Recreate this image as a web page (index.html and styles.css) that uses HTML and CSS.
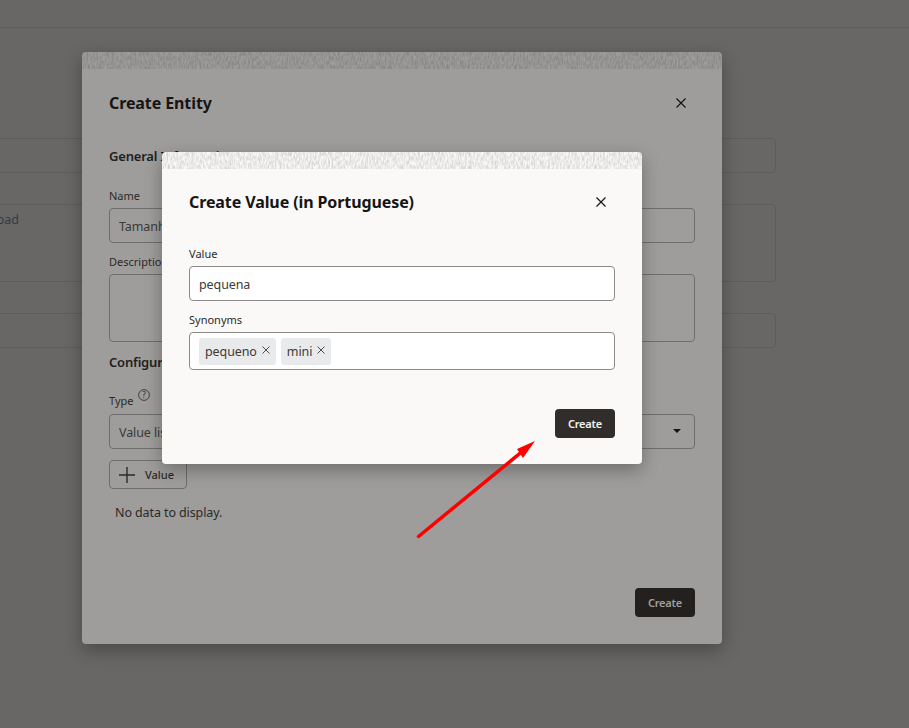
FILE: index.html
```html
<!DOCTYPE html>
<html lang="en">
<head>
    <meta charset="UTF-8">
    <meta name="viewport" content="width=device-width, initial-scale=1.0">
    <title>Create Value</title>
    <link rel="stylesheet" href="styles.css">
</head>
<body>
    <svg class="defs" width="0" height="0">
        <filter id="grain" x="0" y="0" width="100%" height="100%">
            <feTurbulence type="fractalNoise" baseFrequency="0.6 0.22" numOctaves="2" seed="4"/>
            <feColorMatrix values="0 0 0 0 0  0 0 0 0 0  0 0 0 0 0  0.3 0 0 0 -0.09"/>
        </filter>
    </svg>

    <div class="topbar"></div>
    <div class="page-form">
        <div class="page-field"></div>
        <div class="page-field page-area"><span class="page-link">Upload</span></div>
        <div class="page-field"></div>
    </div>

    <div class="dialog dialog-entity">
        <svg class="strip"><rect width="100%" height="100%" filter="url(#grain)"/></svg>
        <div class="dialog-body">
            <div class="dialog-head">
                <h2>Create Entity</h2>
                <svg class="close" viewBox="0 0 10 10"><path d="M.5.5l9 9M9.5.5l-9 9"/></svg>
            </div>
            <h3 class="section">General Information</h3>
            <label class="name-label">Name</label>
            <div class="field">Tamanho</div>
            <label>Description</label>
            <div class="field area"></div>
            <h3 class="section config">Configuration</h3>
            <label class="type-label">Type
                <svg class="help" viewBox="0 0 12 12"><circle cx="6" cy="6" r="5.4"/><text x="6" y="8.7" text-anchor="middle">?</text></svg>
            </label>
            <div class="field select">Value list
                <svg class="caret" viewBox="0 0 8 4"><path d="M0 0h8L4 4z"/></svg>
            </div>
            <button class="add">
                <svg class="plus" viewBox="0 0 16 16"><path d="M8 0v16M0 8h16"/></svg>
                Value
            </button>
            <p class="empty">No data to display.</p>
            <div class="dialog-foot"><button class="primary">Create</button></div>
        </div>
    </div>

    <div class="dialog dialog-value">
        <svg class="strip"><rect width="100%" height="100%" filter="url(#grain)"/></svg>
        <div class="dialog-body">
            <div class="dialog-head">
                <h2>Create Value (in Portuguese)</h2>
                <svg class="close" viewBox="0 0 10 10"><path d="M.5.5l9 9M9.5.5l-9 9"/></svg>
            </div>
            <label class="value-label">Value</label>
            <div class="field">pequena</div>
            <label>Synonyms</label>
            <div class="field chips">
                <span class="chip">pequeno <svg viewBox="0 0 8 8"><path d="M.5.5l7 7M7.5.5l-7 7"/></svg></span>
                <span class="chip">mini <svg viewBox="0 0 8 8"><path d="M.5.5l7 7M7.5.5l-7 7"/></svg></span>
            </div>
            <div class="dialog-foot"><button class="primary">Create</button></div>
        </div>
    </div>

    <svg class="arrow" viewBox="0 0 909 728">
        <path class="arrow-line" d="M418.500 536.500L524 450"/>
        <path class="arrow-head" d="M535 441L517 449L523 458z"/>
    </svg>
</body>
</html>
```

FILE: styles.css
```css
* {
    box-sizing: border-box;
}

body {
    margin: 0;
    height: 728px;
    overflow: hidden;
    position: relative;
    background-color: #686765;
    font-family: "Noto Sans", Arial, sans-serif;
    color: #161513;
}

.defs {
    position: absolute;
}

/* page behind the dialogs */
.topbar {
    height: 28px;
    border-bottom: 1px solid #5e5d5b;
}

.page-form {
    margin: 110px 133px 0 -100px;
}

.page-field {
    height: 35px;
    margin-bottom: 31px;
    border: 1px solid #5e5d5b;
    border-radius: 4px;
}

.page-area {
    height: 78px;
    padding: 6px 0 0 76px;
    font-size: 12.500px;
    letter-spacing: -0.1px;
    color: #2f3d4a;
}

/* dialogs */
.dialog {
    position: absolute;
    display: flex;
    flex-direction: column;
    border-radius: 4px;
    overflow: hidden;
    box-shadow: 0 6px 18px rgba(0, 0, 0, 0.3);
}

.dialog-entity {
    left: 82px;
    top: 52px;
    width: 640px;
    height: 592px;
    background-color: #9e9d9b;
}

.dialog-value {
    left: 162px;
    top: 152px;
    width: 480px;
    height: 312px;
    background-color: #faf9f7;
}

.strip {
    display: block;
    width: 100%;
    height: 17px;
    flex: none;
}

.dialog-body {
    flex: 1;
    display: flex;
    flex-direction: column;
    padding: 16px 27px 27px;
}

.dialog-entity .dialog-body {
    padding-top: 17px;
}

.dialog-value .dialog-body {
    padding-bottom: 26px;
}

.dialog-head {
    height: 34px;
    display: flex;
    align-items: center;
    justify-content: space-between;
}

h2 {
    margin: 0;
    font-size: 16px;
    font-weight: 700;
    line-height: 20px;
    letter-spacing: -0.1px;
}

.close {
    width: 10px;
    height: 10px;
    margin-right: 9px;
    fill: none;
    stroke: #161513;
    stroke-width: 1.2;
}

.section {
    margin: 26px 0 0;
    height: 20px;
    font-size: 13px;
    font-weight: 600;
    line-height: 20px;
    letter-spacing: -0.2px;
    color: #22201e;
}

.section.config {
    margin-top: 10px;
}

label {
    display: block;
    height: 16px;
    margin-top: 11px;
    margin-bottom: 4px;
    font-size: 11px;
    line-height: 16px;
    color: #2c2a28;
}

.name-label {
    margin-top: 22px;
}

.value-label {
    margin-top: 27px;
}

.type-label {
    margin-top: 20px;
    margin-bottom: 6px;
    position: relative;
    line-height: 18px;
}

.help {
    position: absolute;
    left: 29px;
    top: -3px;
    width: 12px;
    height: 12px;
    fill: none;
    stroke: #2c2a28;
    stroke-width: 0.8;
}

.help text {
    font-size: 8px;
    fill: #2c2a28;
    stroke: none;
}

.field {
    height: 35px;
    padding: 1px 9px 0;
    display: flex;
    align-items: center;
    justify-content: space-between;
    border: 1px solid #6f6e6c;
    border-radius: 4px;
    font-size: 12.500px;
    letter-spacing: -0.1px;
    color: #3c3a38;
}

.dialog-value .field {
    background-color: #fff;
    border-color: #8b8a88;
}

.area {
    height: 68px;
}

.caret {
    width: 8px;
    height: 4px;
    margin: -2px 4px 0 0;
    fill: #161513;
}

.add {
    width: 78px;
    height: 29px;
    margin-top: 11px;
    padding: 0 0 0 9px;
    display: flex;
    align-items: center;
    gap: 10px;
    background: none;
    border: 1px solid #6f6e6c;
    border-radius: 4px;
    font-family: inherit;
    font-size: 11px;
    font-weight: 500;
    color: #2c2a28;
}

.plus {
    width: 16px;
    height: 16px;
    fill: none;
    stroke: #2c2a28;
    stroke-width: 1.4;
}

.empty {
    margin: 15px 0 0 6px;
    font-size: 12.500px;
    letter-spacing: -0.1px;
    line-height: 18px;
    color: #2c2a28;
}

.field.chips {
    height: 38px;
    padding: 0 9px;
    justify-content: flex-start;
    gap: 5px;
}

.chip {
    height: 27px;
    padding: 0 6px;
    display: flex;
    align-items: center;
    gap: 5px;
    background-color: #e8eaec;
    border-radius: 3px;
}

.chip svg {
    width: 8px;
    height: 8px;
    margin-top: -3px;
    fill: none;
    stroke: #4f4e4c;
    stroke-width: 1;
}

.dialog-foot {
    margin-top: auto;
    display: flex;
    justify-content: flex-end;
}

.primary {
    width: 60px;
    height: 29px;
    padding: 0;
    background-color: #312d2a;
    border: none;
    border-radius: 4px;
    font-family: inherit;
    font-size: 11px;
    font-weight: 600;
    letter-spacing: -0.2px;
    color: #f5f4f2;
}

.dialog-entity .primary {
    background-color: #23201e;
    color: #a09f9d;
}

.arrow {
    position: absolute;
    left: 0;
    top: 0;
    width: 909px;
    height: 728px;
    pointer-events: none;
}

.arrow-line {
    fill: none;
    stroke: #fe0000;
    stroke-width: 3.500;
    stroke-linecap: round;
}

.arrow-head {
    fill: #fe0000;
}
```
